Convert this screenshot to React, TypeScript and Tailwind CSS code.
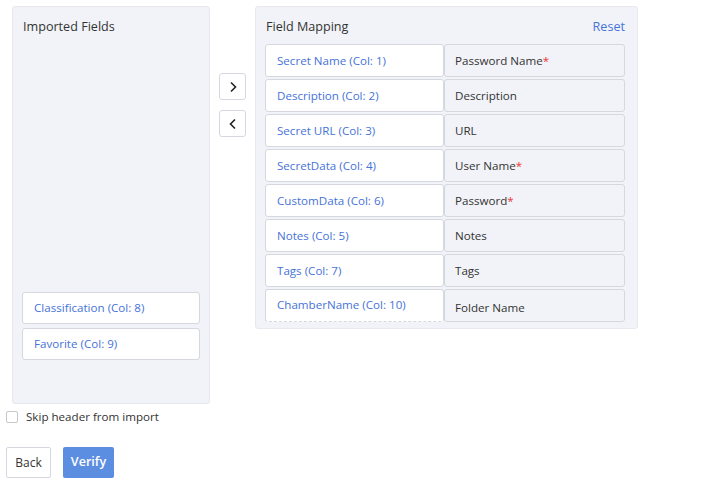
import React from "react";

const rows: { src: string; dst: string; req?: boolean }[] = [
  { src: "Secret Name (Col: 1)", dst: "Password Name", req: true },
  { src: "Description (Col: 2)", dst: "Description" },
  { src: "Secret URL (Col: 3)", dst: "URL" },
  { src: "SecretData (Col: 4)", dst: "User Name", req: true },
  { src: "CustomData (Col: 6)", dst: "Password", req: true },
  { src: "Notes (Col: 5)", dst: "Notes" },
  { src: "Tags (Col: 7)", dst: "Tags" },
  { src: "ChamberName (Col: 10)", dst: "Folder Name" },
];

export default function App() {
  return (
    <div
      className="w-[710px] h-[494px] bg-white text-[11.6px] text-[#333]"
      style={{ fontFamily: '"Open Sans", "Noto Sans", sans-serif' }}
    >
      <div className="flex items-start pt-[6px] pl-[12px]">
        {/* Imported fields */}
        <div className="w-[198px] h-[398px] bg-[#f2f3f8] border border-[#e8e9ef] rounded-[3px] flex flex-col px-[9px] pb-[43px]">
          <div className="pl-[1px] pt-[11px] leading-[18px] text-[12.6px]">Imported Fields</div>
          <div className="mt-auto flex flex-col gap-[4px]">
            <div className="h-[32px] bg-white border border-[#d6d8e0] rounded-[3px] flex items-center px-[11px] text-[#4673d8]">
              Classification (Col: 8)
            </div>
            <div className="h-[32px] bg-white border border-[#d6d8e0] rounded-[3px] flex items-center px-[11px] text-[#4673d8]">
              Favorite (Col: 9)
            </div>
          </div>
        </div>

        {/* arrows */}
        <div className="flex flex-col gap-[10px] ml-[9px] mt-[67px]">
          <button className="w-[27px] h-[27px] bg-white border border-[#d6d8e0] rounded-[3px] flex items-center justify-center">
            <svg width="10" height="12" viewBox="0 0 10 12" fill="none" stroke="#222" strokeWidth="1.6">
              <path d="M3 1.5 L7.5 6 L3 10.5" />
            </svg>
          </button>
          <button className="w-[27px] h-[27px] bg-white border border-[#d6d8e0] rounded-[3px] flex items-center justify-center">
            <svg width="10" height="12" viewBox="0 0 10 12" fill="none" stroke="#222" strokeWidth="1.6">
              <path d="M7 1.5 L2.5 6 L7 10.5" />
            </svg>
          </button>
        </div>

        {/* Field mapping */}
        <div className="ml-[9px] w-[383px] h-[323px] bg-[#f2f3f8] border border-[#e8e9ef] rounded-[3px] pl-[9px] pr-[12px] pt-[11px]">
          <div className="flex justify-between items-center leading-[18px] pl-[1px]">
            <span className="text-[12.6px]">Field Mapping</span>
            <span className="text-[#4673d8] text-[12.6px]">Reset</span>
          </div>
          <div className="mt-[8px] flex flex-col gap-[2px]">
            {rows.map((r, i) => {
              const last = i === rows.length - 1;
              return (
                <div key={r.src} className="flex h-[33px]">
                  <div
                    className="w-[179px] bg-white border border-[#d6d8e0] rounded-[3px] flex items-center pl-[11px] text-[#4673d8]"
                    style={last ? { borderBottomStyle: "dashed", alignItems: "flex-start", paddingTop: 6 } : undefined}
                  >
                    {r.src}
                  </div>
                  <div
                    className="w-[181px] bg-[#f2f3f8] border border-[#d6d8e0] rounded-[3px] flex items-center pl-[10px]"
                    style={last ? { paddingTop: 4 } : undefined}
                  >
                    {r.dst}
                    {r.req && <span className="text-[#e33]">*</span>}
                  </div>
                </div>
              );
            })}
          </div>
        </div>
      </div>

      <div className="flex items-center mt-[5px] pl-[6px] h-[16px]">
        <div className="w-[12px] h-[12px] border border-[#c8c8c8] rounded-[2px] bg-white" />
        <span className="ml-[8px]">Skip header from import</span>
      </div>

      <div className="flex gap-[12px] pl-[6px] mt-[22px]">
        <button className="w-[45px] h-[31px] bg-white border border-[#d6d8e0] rounded-[2px] text-[#333] text-[12px]">
          Back
        </button>
        <button className="w-[51px] h-[31px] bg-[#5b8ee0] rounded-[2px] text-white text-[12.6px] font-semibold">
          Verify
        </button>
      </div>
    </div>
  );
}
